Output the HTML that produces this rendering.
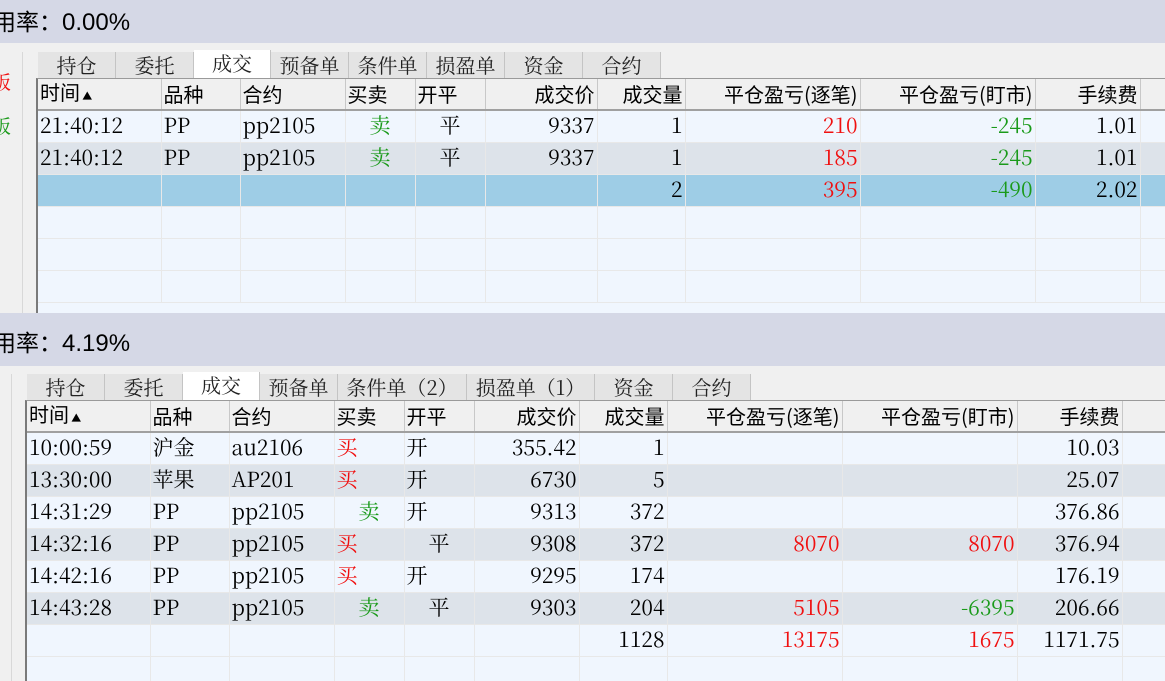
<!DOCTYPE html>
<html><head><meta charset="utf-8"><style>
*{margin:0;padding:0;box-sizing:border-box}
body{width:1165px;height:681px;overflow:hidden;background:#f0f0f0;position:relative;font-family:"Liberation Sans","Noto Sans CJK SC",sans-serif}
.band{position:absolute;left:0;width:1165px;background:#d5d8e6;font-size:23px;color:#000;font-family:"Noto Sans CJK SC",sans-serif}
.band span{position:absolute;left:-7px;line-height:28px}
.band b{font-weight:normal;font-family:"Liberation Sans",sans-serif;font-size:24px}
.lp{position:absolute;top:0;border-right:1px solid #d8d8d8;background:#f0f0f0}
.tabs{position:absolute;height:26px}
.tab{position:absolute;top:0;height:26px;background:#e4e4e4;border-right:1px solid #c4c4c4;font-size:20px;text-align:center;line-height:26px;color:#222;font-family:"Noto Serif CJK SC",serif}
.tab.on{background:#fff;top:-2px;height:28px}
.tbl{position:absolute;right:0;background:#f0f6fe;border-left:2px solid #7a7a7a;border-top:1px solid #9a9a9a;overflow:hidden}
table{border-collapse:collapse;table-layout:fixed}
td{height:32px;line-height:28px;padding:0 2px 3px;border-right:1px solid #e8e8e8;border-bottom:1px solid #e8e8e8;font-family:"Noto Serif CJK SC",serif;font-size:21px;white-space:nowrap;overflow:hidden;color:#000}
tr.h td{height:31px;padding:0 2px;line-height:26px;background:#f0f0f0;font-family:"Noto Sans CJK SC",sans-serif;font-size:20px;border-right:1px solid #c8c8c8;border-bottom:2px solid #a0a0a0}
tr.g td{background:#dde3ea}
tr.b td{background:#9ecde6}
.r{text-align:right}.c{text-align:center}
.red{color:#f01010}.grn{color:#1a9a1a}
</style></head><body>

<div class="band" style="top:0;height:43px"><span style="top:6px">用率：<b>0.00%</b></span></div>
<div class="lp" style="top:52px;left:0;width:23px;height:261px">
<div style="position:absolute;left:-8px;top:16px;color:#f01010;font-size:19px;font-family:'Noto Serif CJK SC',serif">板</div>
<div style="position:absolute;left:-8px;top:60px;color:#1a9a1a;font-size:19px;font-family:'Noto Serif CJK SC',serif">板</div>
</div>
<div class="tabs" style="top:52px;left:38px">
<div class="tab" style="left:0;width:78px">持仓</div>
<div class="tab" style="left:78px;width:78px">委托</div>
<div class="tab on" style="left:156px;width:77px">成交</div>
<div class="tab" style="left:233px;width:78px">预备单</div>
<div class="tab" style="left:311px;width:78px">条件单</div>
<div class="tab" style="left:389px;width:78px">损盈单</div>
<div class="tab" style="left:467px;width:78px">资金</div>
<div class="tab" style="left:545px;width:78px">合约</div>
</div>
<div class="tbl" style="top:78px;left:36px;height:235px">
<table style="width:1140px">
<colgroup><col style="width:123px"><col style="width:79px"><col style="width:105px"><col style="width:70px"><col style="width:70px"><col style="width:112px"><col style="width:88px"><col style="width:175px"><col style="width:175px"><col style="width:105px"><col></colgroup>
<tr class="h"><td>时间<span style="font-size:10px"> ▲</span></td><td>品种</td><td>合约</td><td>买卖</td><td>开平</td><td class="r">成交价</td><td class="r">成交量</td><td class="r">平仓盈亏(逐笔)</td><td class="r">平仓盈亏(盯市)</td><td class="r">手续费</td><td></td></tr>
<tr><td>21:40:12</td><td>PP</td><td>pp2105</td><td class="c grn">卖</td><td class="c">平</td><td class="r">9337</td><td class="r">1</td><td class="r red">210</td><td class="r grn">-245</td><td class="r">1.01</td><td></td></tr>
<tr class="g"><td>21:40:12</td><td>PP</td><td>pp2105</td><td class="c grn">卖</td><td class="c">平</td><td class="r">9337</td><td class="r">1</td><td class="r red">185</td><td class="r grn">-245</td><td class="r">1.01</td><td></td></tr>
<tr class="b"><td></td><td></td><td></td><td></td><td></td><td></td><td class="r">2</td><td class="r red">395</td><td class="r grn">-490</td><td class="r">2.02</td><td></td></tr>
<tr><td></td><td></td><td></td><td></td><td></td><td></td><td></td><td></td><td></td><td></td><td></td></tr>
<tr><td></td><td></td><td></td><td></td><td></td><td></td><td></td><td></td><td></td><td></td><td></td></tr>
<tr><td></td><td></td><td></td><td></td><td></td><td></td><td></td><td></td><td></td><td></td><td></td></tr>
</table></div>

<div class="band" style="top:313px;height:53px"><span style="top:14px">用率：<b>4.19%</b></span></div>
<div class="lp" style="top:374px;left:0;width:12px;height:307px"></div>
<div class="tabs" style="top:374px;left:27px">
<div class="tab" style="left:0;width:78px">持仓</div>
<div class="tab" style="left:78px;width:78px">委托</div>
<div class="tab on" style="left:156px;width:77px">成交</div>
<div class="tab" style="left:233px;width:78px">预备单</div>
<div class="tab" style="left:311px;width:129px">条件单（2）</div>
<div class="tab" style="left:440px;width:128px">损盈单（1）</div>
<div class="tab" style="left:568px;width:78px">资金</div>
<div class="tab" style="left:646px;width:78px">合约</div>
</div>
<div class="tbl" style="top:400px;left:25px;height:281px">
<table style="width:1140px">
<colgroup><col style="width:123px"><col style="width:79px"><col style="width:105px"><col style="width:70px"><col style="width:70px"><col style="width:105px"><col style="width:88px"><col style="width:175px"><col style="width:175px"><col style="width:105px"><col></colgroup>
<tr class="h"><td>时间<span style="font-size:10px"> ▲</span></td><td>品种</td><td>合约</td><td>买卖</td><td>开平</td><td class="r">成交价</td><td class="r">成交量</td><td class="r">平仓盈亏(逐笔)</td><td class="r">平仓盈亏(盯市)</td><td class="r">手续费</td><td></td></tr>
<tr><td>10:00:59</td><td>沪金</td><td>au2106</td><td class="red">买</td><td>开</td><td class="r">355.42</td><td class="r">1</td><td></td><td></td><td class="r">10.03</td><td></td></tr>
<tr class="g"><td>13:30:00</td><td>苹果</td><td>AP201</td><td class="red">买</td><td>开</td><td class="r">6730</td><td class="r">5</td><td></td><td></td><td class="r">25.07</td><td></td></tr>
<tr><td>14:31:29</td><td>PP</td><td>pp2105</td><td class="c grn">卖</td><td>开</td><td class="r">9313</td><td class="r">372</td><td></td><td></td><td class="r">376.86</td><td></td></tr>
<tr class="g"><td>14:32:16</td><td>PP</td><td>pp2105</td><td class="red">买</td><td class="c">平</td><td class="r">9308</td><td class="r">372</td><td class="r red">8070</td><td class="r red">8070</td><td class="r">376.94</td><td></td></tr>
<tr><td>14:42:16</td><td>PP</td><td>pp2105</td><td class="red">买</td><td>开</td><td class="r">9295</td><td class="r">174</td><td></td><td></td><td class="r">176.19</td><td></td></tr>
<tr class="g"><td>14:43:28</td><td>PP</td><td>pp2105</td><td class="c grn">卖</td><td class="c">平</td><td class="r">9303</td><td class="r">204</td><td class="r red">5105</td><td class="r grn">-6395</td><td class="r">206.66</td><td></td></tr>
<tr><td></td><td></td><td></td><td></td><td></td><td></td><td class="r">1128</td><td class="r red">13175</td><td class="r red">1675</td><td class="r">1171.75</td><td></td></tr>
<tr><td></td><td></td><td></td><td></td><td></td><td></td><td></td><td></td><td></td><td></td><td></td></tr>
</table></div>
</body></html>
